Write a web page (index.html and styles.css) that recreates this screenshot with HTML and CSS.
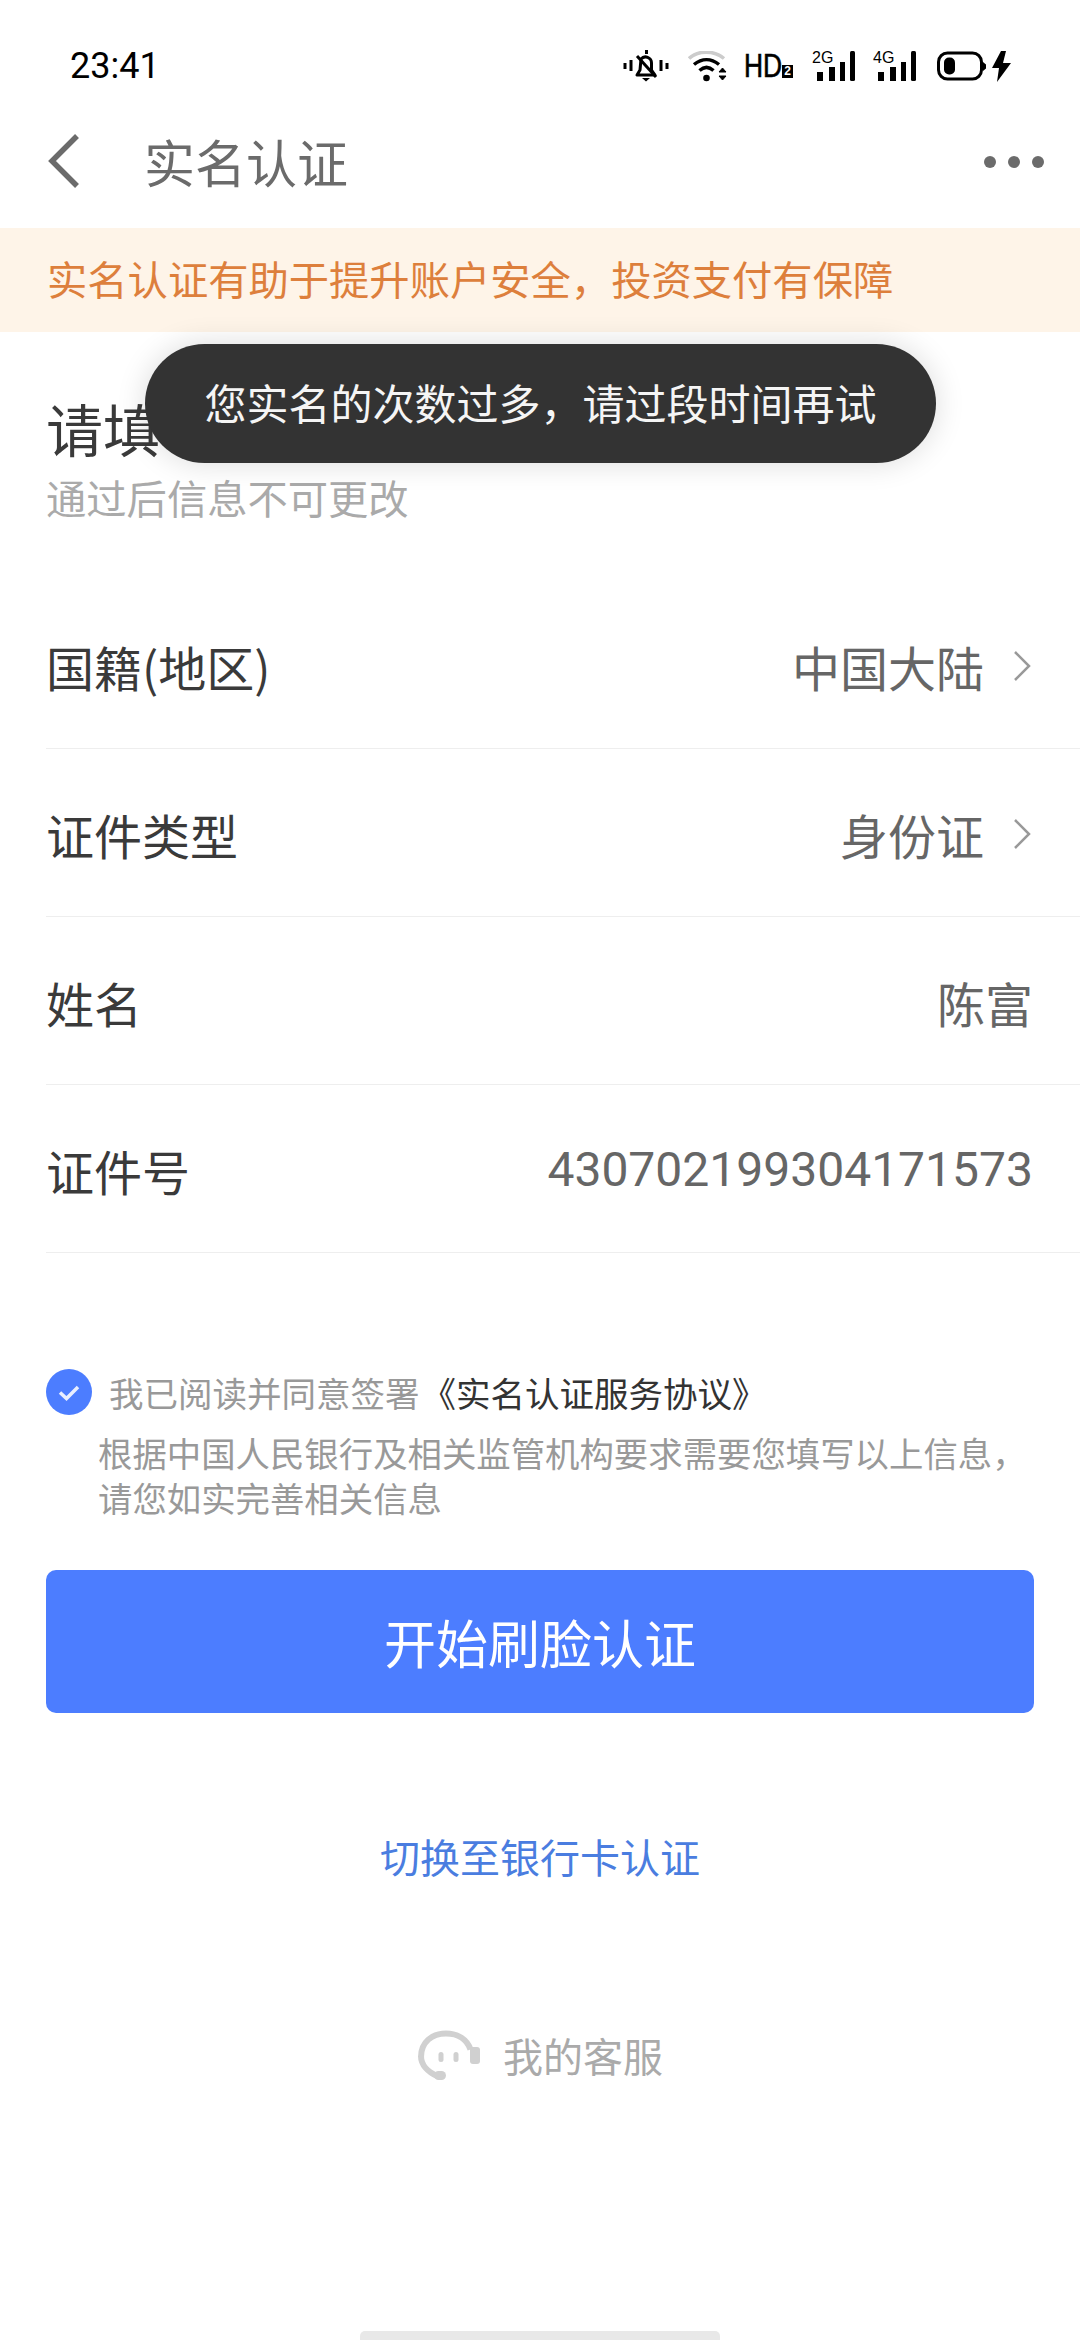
FILE: index.html
```html
<!DOCTYPE html>
<html lang="zh">
<head>
<meta charset="utf-8">
<title>实名认证</title>
<link rel="stylesheet" href="styles.css">
</head>
<body>
<div class="page">
  <header class="status">
    <span class="time">23:41</span>
    <div class="status-icons">
      <svg class="ic-bell" width="46" height="32" viewBox="0 0 46 32"><g fill="none" stroke="#000" stroke-width="3"><path d="M2 13v6M8 10v11M38 10v11M44 13v6"/><path d="M14 25h18l-3.500-5v-7a6 6 0 0 0-10.500-4l-1 11z" stroke-linejoin="round"/><path d="M14 6l19 21"/></g><path d="M22 0h3v4h-3zM19 28h8l-4 3.500z" fill="#000"/></svg>
      <svg class="ic-wifi" width="40" height="31" viewBox="0 0 40 31"><path d="M1 7.500C10-1 26-1 36 7.500" fill="none" stroke="#ccc" stroke-width="3.500"/><path d="M6 13.500C14 7 23 7 31 13.500M11.500 19.500C16 15.500 21 15.500 25.500 19.500" fill="none" stroke="#000" stroke-width="3.500"/><circle cx="18.500" cy="27" r="3.300"/><path d="M31 21l3.500-4 3.500 4zM31 25l3.500 4 3.500-4z" stroke="#000" stroke-width="1"/></svg>
      <div class="ic-hd"><span class="hd-t">HD</span><span class="hd-n">2</span></div>
      <div class="sig"><span class="sig-t">2G</span><svg width="43" height="30" viewBox="0 0 43 30"><path d="M5 21h6v9H5zM17 16h6v14h-6zM28 11h5v19h-5z"/><rect x="38" y="0" width="5" height="30" rx="1.500"/></svg></div>
      <div class="sig sig-last"><span class="sig-t">4G</span><svg width="43" height="30" viewBox="0 0 43 30"><path d="M5 21h6v9H5zM17 16h6v14h-6zM28 11h5v19h-5z"/><rect x="38" y="0" width="5" height="30" rx="1.500"/></svg></div>
      <svg class="ic-bat" width="74" height="31" viewBox="0 0 74 31"><rect x="1.500" y="2" width="43" height="26" rx="9" fill="none" stroke="#000" stroke-width="3"/><rect x="7" y="6.500" width="11" height="17" rx="5"/><path d="M46 11l3 2.500v4l-3 2.500z"/><path d="M64 0L55 17h7l-2 14 14-19h-8l3-12z"/></svg>
    </div>
  </header>

  <nav class="navbar">
    <svg class="back" width="36" height="56" viewBox="0 0 36 56"><path d="M31 3L6 28l25 25" fill="none" stroke="#6b6b6b" stroke-width="5.500"/></svg>
    <h1 class="nav-title">实名认证</h1>
    <div class="more"><i></i><i></i><i></i></div>
  </nav>

  <div class="banner">实名认证有助于提升账户安全，投资支付有保障</div>

  <section class="intro">
    <h2 class="intro-title">请填写实名信息</h2>
    <p class="intro-sub">通过后信息不可更改</p>
  </section>

  <section class="form">
    <div class="row">
      <span class="label">国籍(地区)</span>
      <span class="value">中国大陆<svg class="chev" width="20" height="32" viewBox="0 0 20 32"><path d="M3 2l14 14L3 30" fill="none" stroke="#999" stroke-width="2.500"/></svg></span>
    </div>
    <div class="row">
      <span class="label">证件类型</span>
      <span class="value">身份证<svg class="chev" width="20" height="32" viewBox="0 0 20 32"><path d="M3 2l14 14L3 30" fill="none" stroke="#999" stroke-width="2.500"/></svg></span>
    </div>
    <div class="row">
      <span class="label">姓名</span>
      <span class="value">陈富</span>
    </div>
    <div class="row">
      <span class="label">证件号</span>
      <span class="value num">430702199304171573</span>
    </div>
  </section>

  <section class="agree">
    <div class="agree-line">
      <svg class="check" width="46" height="46" viewBox="0 0 46 46"><circle cx="23" cy="23" r="23" fill="#4c7dff"/><path d="M14 23.500l6.500 6L32 18" fill="none" stroke="#e8eeff" stroke-width="3.500"/></svg>
      <span class="agree-t">我已阅读并同意签署<a class="agree-link">《实名认证服务协议》</a></span>
    </div>
    <p class="agree-note">根据中国人民银行及相关监管机构要求需要您填写以上信息，<br>请您如实完善相关信息</p>
  </section>

  <button class="cta">开始刷脸认证</button>
  <a class="switch">切换至银行卡认证</a>

  <div class="service">
    <svg class="svc-ic" width="63" height="50" viewBox="0 0 63 50"><g fill="none" stroke="#d0d0d0" stroke-width="6"><path d="M4 27C4 12 15 3.500 29 3.500c12 0 21 6 24.500 16"/><path d="M4 26c0 9 7 16 16 20"/></g><g fill="#d0d0d0"><rect x="53" y="17" width="10" height="17" rx="3"/><rect x="17" y="41" width="12" height="9" rx="4.500"/><rect x="21.500" y="22" width="5" height="10" rx="2.500"/><rect x="36.500" y="22" width="5" height="10" rx="2.500"/></g></svg>
    <span class="svc-t">我的客服</span>
  </div>

  <div class="home-bar"></div>

  <div class="toast">您实名的次数过多，请过段时间再试</div>
</div>
</body>
</html>
```

FILE: styles.css
```css
* { box-sizing: border-box; }
html, body { margin: 0; padding: 0; background: #fff; }
body { font-family: "Noto Sans CJK SC", "Noto Sans", Roboto, sans-serif; }
.page { position: relative; width: 1080px; height: 2340px; overflow: hidden; display: flex; flex-direction: column; background: #fff; }

.status { height: 100px; padding: 43px 69px 0 70px; display: flex; justify-content: space-between; align-items: flex-start; flex: none; }
.time { font: 400 36px/46px Roboto, sans-serif; color: #000; }
.status-icons { display: flex; align-items: center; height: 46px; }
.ic-bell { margin-right: 19px; }
.ic-wifi { margin-right: 16px; }
.ic-hd { display: flex; align-items: flex-end; width: 49px; height: 24px; margin-right: 19px; color: #000; }
.hd-t { font: 400 33px/24px "Liberation Sans", sans-serif; transform: scaleX(.8); transform-origin: left; width: 38px; -webkit-text-stroke: .6px #000; }
.hd-n { background: #000; color: #fff; font: 700 12px/13px "Liberation Sans", sans-serif; width: 11px; height: 13px; text-align: center; }
.sig { position: relative; width: 43px; height: 30px; margin-right: 18px; }
.sig svg { display: block; }
.sig-last { margin-right: 21px; }
.sig-t { position: absolute; left: 0; top: 0; font: 400 16px/14px "Liberation Sans", sans-serif; color: #000; }

.navbar { height: 128px; flex: none; display: flex; align-items: center; padding: 0 36px 6px 46px; }
.back { margin-right: 62px; flex: none; }
.nav-title { margin: 0; font-size: 51px; font-weight: 400; color: #6b6b6b; line-height: 64px; flex: 1; }
.more { display: flex; gap: 12px; margin-top: 2px; }
.more i { width: 12px; height: 12px; border-radius: 50%; background: #6b6b6b; }

.banner { height: 104px; flex: none; background: #fef4e8; color: #dd7f3c; font-size: 40.3px; line-height: 100px; padding-left: 47px; }

.intro { padding: 63px 46px 0; flex: none; }
.intro-title { margin: 0; font-size: 57px; line-height: 64px; font-weight: 400; color: #3a3a3a; }
.intro-sub { margin: 13px 0 0; font-size: 40.3px; line-height: 50px; color: #aaa; }

.form { padding-left: 46px; flex: none; margin-top: 59px; }
.row { height: 168px; display: flex; align-items: center; justify-content: space-between; border-bottom: 1px solid #eee; padding: 2px 47px 0 0; }
.label { font-size: 48px; color: #3a3a3a; }
.value { font-size: 48px; color: #666; display: flex; align-items: center; }
.num { font-family: Roboto, sans-serif; }
.chev { margin-left: 28px; margin-right: 1px; }

.agree { padding: 0 46px; margin-top: 116px; flex: none; }
.agree-line { display: flex; align-items: center; gap: 17px; height: 46px; }
.check { flex: none; }
.agree-t { font-size: 34.5px; color: #999; }
.agree-link { color: #333; margin-left: 2px; }
.agree-note { margin: 15px 0 0 52px; font-size: 34.4px; line-height: 45px; color: #999; white-space: nowrap; }

.cta { margin: 50px 46px 0; height: 143px; width: 988px; flex: none; border: 0; border-radius: 10px; background: #4c7dff; color: #fff; font: 400 52px "Noto Sans CJK SC", sans-serif; }
.switch { margin-top: 113px; text-align: center; font-size: 40px; line-height: 60px; color: #4a7de0; flex: none; }
.service { margin-top: 141px; display: flex; align-items: center; justify-content: center; gap: 23px; flex: none; }
.svc-t { font-size: 40px; color: #aaa; line-height: 56px; }

.home-bar { position: absolute; left: 360px; bottom: 0; width: 360px; height: 9px; background: #e8e8e8; border-radius: 5px 5px 0 0; }

.toast { position: absolute; left: 145px; top: 344px; width: 791px; height: 119px; border-radius: 60px; background: #333; color: #f5f5f5; font-size: 42px; line-height: 116px; text-align: center; box-shadow: 0 0 30px rgba(0,0,0,.14); }
```
